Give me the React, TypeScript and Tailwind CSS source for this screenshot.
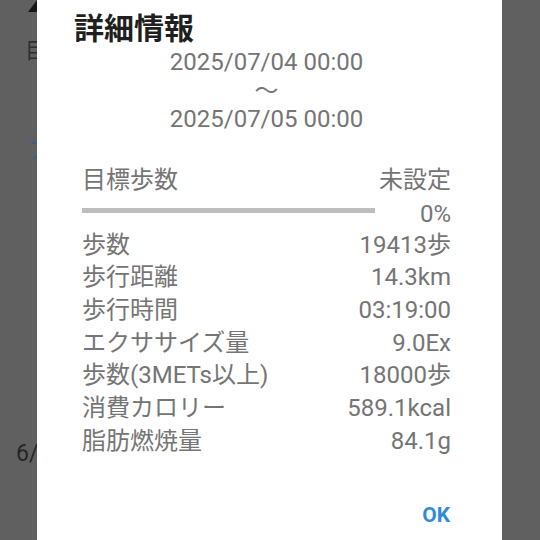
import React from "react";

const rows: [string, string][] = [
  ["歩数", "19413歩"],
  ["歩行距離", "14.3km"],
  ["歩行時間", "03:19:00"],
  ["エクササイズ量", "9.0Ex"],
  ["歩数(3METs以上)", "18000歩"],
  ["消費カロリー", "589.1kcal"],
  ["脂肪燃焼量", "84.1g"],
];

export default function App() {
  return (
    <div className="relative w-[540px] h-[540px] overflow-hidden bg-[#606060] font-['Roboto','Noto_Sans_CJK_JP',sans-serif]">
      {/* page behind the dialog */}
      <div className="flex flex-col">
        <svg width="9" height="12" viewBox="0 0 9 12" className="ml-[28px]">
          <polygon points="9,0 0,12 9,12" fill="#161616" />
        </svg>
        <div className="ml-[25px] mt-[27px] text-[22px] leading-[24px] text-[#2e2e2e]">目標</div>
        <div className="ml-[28px] mt-[76px] text-[22px] leading-[24px] text-[#3b5f82]">ア</div>
        <div className="ml-[16px] mt-[279px] text-[23px] leading-[24px] text-[#262626]">6/05</div>
      </div>

      {/* dialog */}
      <div className="absolute left-[37px] top-0 w-[465px] h-[540px] bg-white flex flex-col">
        <div className="pl-[37px] h-[48px] flex items-end text-[30px] leading-[38px] font-bold text-[#1f1f1f]">
          詳細情報
        </div>
        <div className="pl-[45px] pr-[51px] flex flex-col items-center text-[24px] leading-[28.5px] text-[#757575]">
          <div>2025/07/04 00:00</div>
          <div>～</div>
          <div>2025/07/05 00:00</div>
        </div>
        <div className="pl-[45px] pr-[51px] mt-[30px] flex flex-col text-[24px] text-[#757575]">
          <div className="flex justify-between leading-[33px]">
            <span>目標歩数</span>
            <span>未設定</span>
          </div>
          <div className="flex items-center h-[32px]">
            <div className="w-[293px] h-[5px] bg-[#bdbdbd] mb-[4px]" />
            <span className="ml-auto leading-[32px] pt-[2px]">0%</span>
          </div>
          {rows.map(([label, value]) => (
            <div key={label} className="flex justify-between leading-[32.7px]">
              <span>{label}</span>
              <span>{value}</span>
            </div>
          ))}
        </div>
        <div className="mt-auto mb-[9px] pr-[52px] flex justify-end">
          <span className="text-[21px] leading-[32px] font-bold text-[#2f8bd6]">OK</span>
        </div>
      </div>
    </div>
  );
}
